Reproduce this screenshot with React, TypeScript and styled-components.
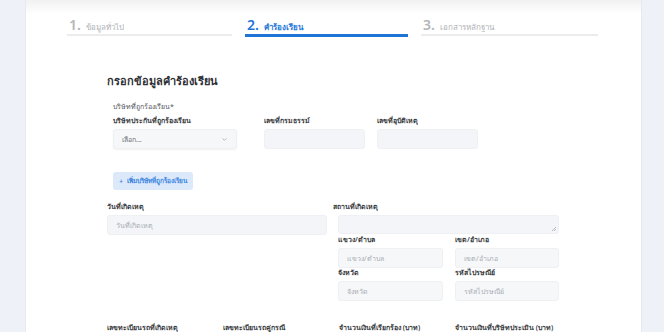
import styled, { createGlobalStyle } from 'styled-components'

const GlobalStyle = createGlobalStyle`
  html, body {
    margin: 0;
    padding: 0;
    background: #eef1f7;
    font-family: "Noto Sans", "DejaVu Sans", sans-serif;
    overflow: hidden;
  }
`

const Page = styled.div`
  padding: 0 23px 0 26px;
  height: 332px;
`

const Card = styled.div`
  background: linear-gradient(#f1f1f2 0px, #ffffff 14px);
  height: 100%;
  box-shadow: 0 0 0 1px #e6e9f0;
  padding-top: 16px;
  box-sizing: border-box;
`

const Stepper = styled.div`
  display: grid;
  grid-template-columns: 165px 163px 177px;
  gap: 13px;
  padding-left: 41px;
`

const Step = styled.div<{ $active?: boolean }>`
  display: flex;
  align-items: baseline;
  gap: 5px;
  height: 18px;
  padding-left: 2px;
  border-bottom: ${p => (p.$active ? '3px solid #1f74d8' : '2px solid #ececee')};
  color: ${p => (p.$active ? '#1f74d8' : '#b4b6ba')};
`

const StepNum = styled.span`
  font-size: 14px;
  font-weight: 600;
  line-height: 18px;
`

const StepName = styled.span<{ $active?: boolean }>`
  font-size: 8px;
  font-weight: ${p => (p.$active ? 600 : 400)};
  color: ${p => (p.$active ? '#2a7ad8' : '#b0b2b6')};
`

const Form = styled.div`
  padding: 36px 0 0 81px;
`

const Heading = styled.h2`
  margin: 0 0 13px;
  font-size: 11px;
  font-weight: 700;
  color: #2e3035;
  line-height: 16px;
`

const Company = styled.div`
  padding-left: 6px;
`

const Caption = styled.div`
  font-size: 7px;
  color: #55585e;
  line-height: 10px;
  margin-bottom: 4px;
`

const Label = styled.div`
  font-size: 7px;
  font-weight: 600;
  color: #3a3d42;
  line-height: 10px;
  margin-bottom: 3px;
  white-space: nowrap;
`

const CompanyRow = styled.div`
  display: flex;
  gap: 12px;
`

const Field = styled.div<{ $w?: number; $after?: number }>`
  display: flex;
  flex-direction: column;
  ${p => (p.$w ? `width: ${p.$w}px;` : '')}
  ${p => (p.$after ? `margin-right: ${p.$after}px;` : '')}
`

const Box = styled.div<{ $h?: number; $soft?: boolean }>`
  height: ${p => p.$h ?? 20}px;
  background: ${p => (p.$soft ? '#f6f7f9' : '#f3f5f9')};
  border: 1px solid #eef0f4;
  border-radius: 3px;
  box-sizing: border-box;
  display: flex;
  align-items: center;
  justify-content: space-between;
  padding: 0 8px;
  font-size: 7px;
  color: #a8adb5;
  position: relative;
`

const SelectBox = styled(Box)`
  background: #f6f7f9;
  box-shadow: 0 1px 2px rgba(0, 0, 0, 0.06);
  color: #6c7078;
`

const Resize = styled.svg`
  position: absolute;
  right: 2px;
  bottom: 2px;
`

const AddButton = styled.button`
  margin-top: 23px;
  height: 18px;
  width: 80px;
  border: none;
  border-radius: 3px;
  background: #dbe9fb;
  color: #3d86e0;
  font-family: inherit;
  font-size: 6.5px;
  font-weight: 600;
  display: flex;
  align-items: center;
  justify-content: center;
  gap: 4px;
  padding: 0;
`

const PlaceRow = styled.div`
  display: grid;
  grid-template-columns: 220px 226px;
  column-gap: 6px;
  margin-top: 12px;
`

const AddressGrid = styled.div`
  display: grid;
  grid-template-columns: 105px 104px;
  column-gap: 12px;
  row-gap: 0;
  margin: 1px 0 0 5px;
`

const Place = styled.div`
  display: flex;
  flex-direction: column;
  & > div:nth-child(2) {
    margin-left: 5px;
  }
`

const BottomRow = styled.div`
  display: grid;
  grid-template-columns: repeat(4, 116px);
  margin-top: 22px;
`

const Chevron = () => (
  <svg width="7" height="7" viewBox="0 0 24 24" fill="none" stroke="#9aa0a8" strokeWidth="2.5" strokeLinecap="round" strokeLinejoin="round">
    <path d="m6 9 6 6 6-6" />
  </svg>
)

const App = () => (
  <>
    <GlobalStyle />
    <Page>
      <Card>
        <Stepper>
          <Step>
            <StepNum>1.</StepNum>
            <StepName>ข้อมูลทั่วไป</StepName>
          </Step>
          <Step $active>
            <StepNum>2.</StepNum>
            <StepName $active>คำร้องเรียน</StepName>
          </Step>
          <Step>
            <StepNum>3.</StepNum>
            <StepName>เอกสารหลักฐาน</StepName>
          </Step>
        </Stepper>

        <Form>
          <Heading>กรอกข้อมูลคำร้องเรียน</Heading>

          <Company>
            <Caption>บริษัทที่ถูกร้องเรียน*</Caption>
            <CompanyRow>
              <Field $w={124} $after={15}>
                <Label>บริษัทประกันที่ถูกร้องเรียน</Label>
                <SelectBox>
                  <span>เลือก...</span>
                  <Chevron />
                </SelectBox>
              </Field>
              <Field $w={101}>
                <Label>เลขที่กรมธรรม์</Label>
                <Box />
              </Field>
              <Field $w={101}>
                <Label>เลขที่อุบัติเหตุ</Label>
                <Box />
              </Field>
            </CompanyRow>
            <AddButton>
              <span>+</span>
              <span>เพิ่มบริษัทที่ถูกร้องเรียน</span>
            </AddButton>
          </Company>

          <PlaceRow>
            <Field>
              <Label>วันที่เกิดเหตุ</Label>
              <Box>วันที่เกิดเหตุ</Box>
            </Field>
            <Place>
              <Label>สถานที่เกิดเหตุ</Label>
              <Box $h={19}>
                <Resize width="5" height="5" viewBox="0 0 5 5">
                  <path d="M5 1 1 5M5 3 3 5" stroke="#a0a4aa" strokeWidth="0.7" />
                </Resize>
              </Box>
              <AddressGrid>
                <Field>
                  <Label>แขวง/ตำบล</Label>
                  <Box $soft>แขวง/ตำบล</Box>
                </Field>
                <Field>
                  <Label>เขต/อำเภอ</Label>
                  <Box $soft>เขต/อำเภอ</Box>
                </Field>
                <Field>
                  <Label>จังหวัด</Label>
                  <Box $soft>จังหวัด</Box>
                </Field>
                <Field>
                  <Label>รหัสไปรษณีย์</Label>
                  <Box $soft>รหัสไปรษณีย์</Box>
                </Field>
              </AddressGrid>
            </Place>
          </PlaceRow>

          <BottomRow>
            <Label>เลขทะเบียนรถที่เกิดเหตุ</Label>
            <Label>เลขทะเบียนรถคู่กรณี</Label>
            <Label>จำนวนเงินที่เรียกร้อง (บาท)</Label>
            <Label>จำนวนเงินที่บริษัทประเมิน (บาท)</Label>
          </BottomRow>
        </Form>
      </Card>
    </Page>
  </>
)

export default App
